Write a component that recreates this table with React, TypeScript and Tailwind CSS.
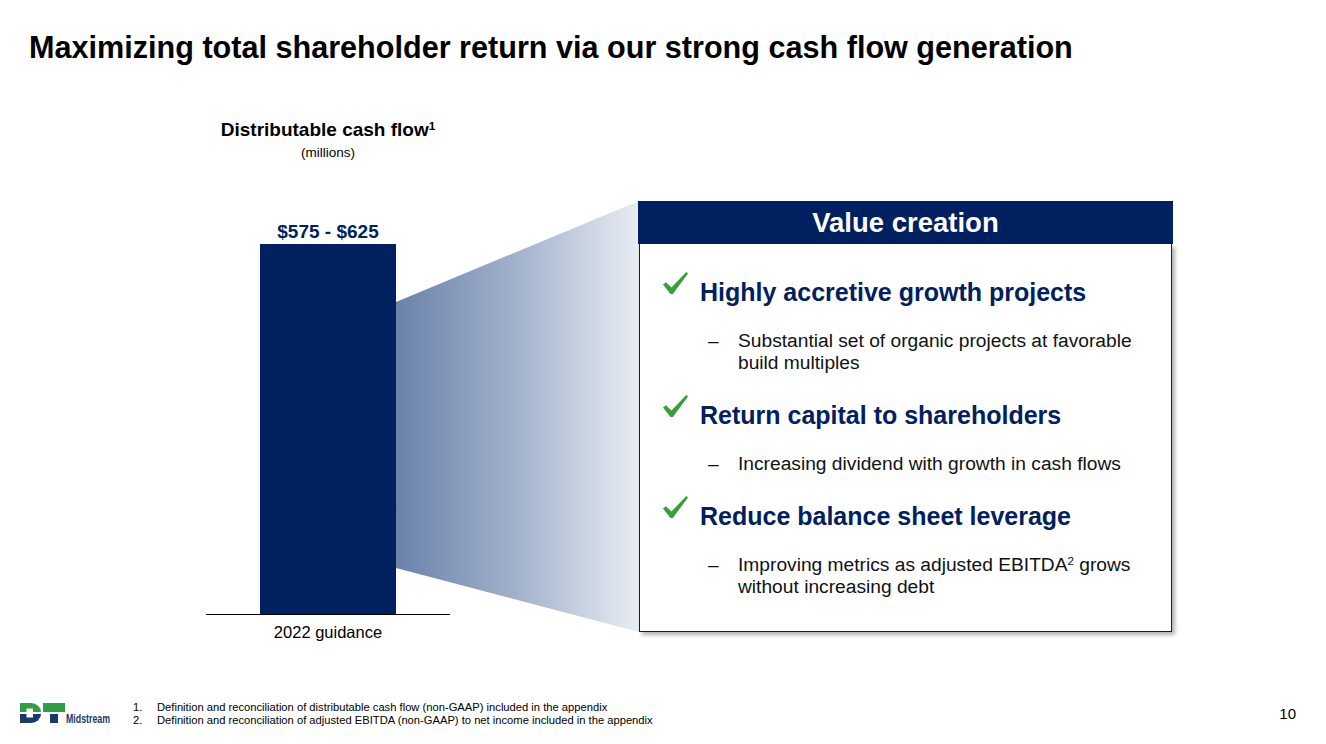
import React from "react";

const navy = "#002060";

const items = [
  {
    title: "Highly accretive growth projects",
    lines: [<>Substantial set of organic projects at favorable</>, <>build multiples</>],
  },
  {
    title: "Return capital to shareholders",
    lines: [<>Increasing dividend with growth in cash flows</>],
  },
  {
    title: "Reduce balance sheet leverage",
    lines: [
      <>
        Improving metrics as adjusted EBITDA<sup className="text-[0.6em]">2</sup> grows
      </>,
      <>without increasing debt</>,
    ],
  },
];

function Check() {
  return (
    <svg viewBox="0 0 25 22" className="-mt-[5px] h-[22px] w-[25px] shrink-0">
      <path d="M0 12.6 L3 10.2 L8.4 15.6 L23.3 0 L25 1.4 L9.9 22 L7.4 22 Z" fill="#3a9e3a" />
    </svg>
  );
}

function Logo() {
  return (
    <svg viewBox="0 0 94 22" className="h-[22px] w-[94px] overflow-visible">
      {/* D */}
      <path d="M0 0 H11 A10 9 0 0 1 21 9 H0 Z" fill="#2f9e44" />
      <path d="M0 11 H21 A10 9 0 0 1 11 20 H0 Z" fill="#1b3a6b" />
      <rect x="6.5" y="5.5" width="6.5" height="3.5" fill="#fff" />
      <rect x="6.5" y="11" width="6.5" height="3.5" fill="#fff" />
      {/* T */}
      <rect x="23" y="0" width="22" height="9" fill="#2f9e44" />
      <rect x="30" y="11" width="8" height="9" fill="#1b3a6b" />
      <text
        x="46"
        y="19.5"
        textLength="44"
        lengthAdjust="spacingAndGlyphs"
        fontFamily="Liberation Sans, Arial, sans-serif"
        fontWeight="bold"
        fontSize="13"
        fill="#1b3a6b"
      >
        Midstream
      </text>
    </svg>
  );
}

function Funnel() {
  return (
    <svg viewBox="0 0 243 431" className="absolute left-[396px] top-[201px] h-[431px] w-[243px]">
      <defs>
        <linearGradient id="fan" x1="0" x2="1" y1="0" y2="0">
          <stop offset="0" stopColor="#6a82ab" />
          <stop offset="0.5" stopColor="#a2b2cb" />
          <stop offset="1" stopColor="#e9edf3" />
        </linearGradient>
      </defs>
      <polygon points="0,101 243,0 243,431 0,367" fill="url(#fan)" />
    </svg>
  );
}

function ChartColumn() {
  return (
    <div className="ml-[206px] flex w-[244px] flex-col items-center">
      <div className="text-[19px] font-bold leading-[22px]">
        Distributable cash flow<sup className="text-[0.62em]">1</sup>
      </div>
      <div className="mt-[4px] text-[13.5px] leading-[16px]">(millions)</div>
      <div className="mt-[60px] text-[19px] font-bold leading-[22px] text-[#002060]">$575 - $625</div>
      <div className="mt-[1px] h-[370px] w-[136px] bg-[#002060]" />
      <div className="h-px w-full bg-black" />
      <div className="mt-[7px] text-[16.5px] leading-[20px]">2022 guidance</div>
    </div>
  );
}

function ValueBox() {
  return (
    <div className="relative z-10 ml-[188px] mt-[82px] w-[535px]">
      <div className="flex h-[43px] items-center justify-center bg-[#002060] text-[27.5px] font-bold text-white">
        Value creation
      </div>
      <div className="mx-px h-[388px] border border-t-0 border-[#0b1f4d] bg-white pl-[23px] pt-[33px] shadow-[3px_3px_4px_rgba(0,0,0,0.3)]">
        <div className="flex flex-col gap-[26px]">
          {items.map((it) => (
            <div key={it.title}>
              <div className="flex items-start gap-[12px]">
                <Check />
                <h3 className="text-[25px] font-bold leading-[30px]" style={{ color: navy }}>
                  {it.title}
                </h3>
              </div>
              <div className="mt-[23px] flex pl-[45px] text-[19.2px] leading-[22px] text-[#111]">
                <span className="w-[30px] shrink-0">–</span>
                <p className="whitespace-nowrap">
                  {it.lines.map((l, i) => (
                    <React.Fragment key={i}>
                      {i > 0 && <br />}
                      {l}
                    </React.Fragment>
                  ))}
                </p>
              </div>
            </div>
          ))}
        </div>
      </div>
    </div>
  );
}

export default function App() {
  return (
    <div className="relative flex h-[744px] w-[1326px] flex-col overflow-hidden bg-white font-['Liberation_Sans',Arial,sans-serif] text-black">
      <h1 className="pl-[29px] pt-[32px] text-[30.6px] font-bold leading-[30px]">
        Maximizing total shareholder return via our strong cash flow generation
      </h1>
      <div className="mt-[57px] flex items-start">
        <ChartColumn />
        <ValueBox />
      </div>
      <Funnel />
      <div className="mt-auto flex items-start pb-[17px]">
        <div className="ml-[20px] mt-[2px]">
          <Logo />
        </div>
        <ol className="ml-[19px] text-[11.2px] leading-[13px]">
          <li className="flex">
            <span className="w-[24px]">1.</span>
            Definition and reconciliation of distributable cash flow (non-GAAP) included in the appendix
          </li>
          <li className="flex">
            <span className="w-[24px]">2.</span>
            Definition and reconciliation of adjusted EBITDA (non-GAAP) to net income included in the appendix
          </li>
        </ol>
        <div className="ml-auto mr-[30px] mt-[4px] text-[15px] leading-[18px]">10</div>
      </div>
    </div>
  );
}
